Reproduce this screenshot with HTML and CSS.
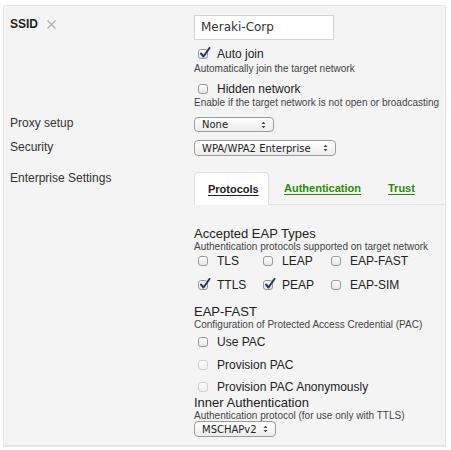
FILE: index.html
```html
<!DOCTYPE html>
<html>
<head>
<meta charset="utf-8">
<link rel="stylesheet" href="styles.css">
</head>
<body>
<div class="panel">
  <div class="form">
    <div class="label ssid-label"><b>SSID</b>
      <svg class="xicon" width="9" height="9" viewBox="0 0 9 9"><path d="M0.5 0.5 L8.5 8.5 M8.5 0.5 L0.5 8.5" stroke="#a9a9a9" stroke-width="1.1" fill="none"/></svg>
    </div>
    <div class="value">
      <div class="textbox">Meraki-Corp</div>
      <div class="check first"><span class="cb checked"><svg width="13" height="13" viewBox="0 0 13 13"><path d="M3 6.5 L5.5 9.5 L11.5 1" stroke="#24395f" stroke-width="2" fill="none" stroke-linecap="round" stroke-linejoin="round"/></svg></span>Auto join</div>
      <div class="help h1">Automatically join the target network</div>
      <div class="check second"><span class="cb"></span>Hidden network</div>
      <div class="help">Enable if the target network is not open or broadcasting</div>
    </div>

    <div class="label proxy-label">Proxy setup</div>
    <div class="value"><div class="select proxy-select w-none">None<span class="arrows"><svg width="5" height="8" viewBox="0 0 5 8"><path d="M0.5 3 L2.5 0.8 L4.5 3 Z M0.5 5 L2.5 7.2 L4.5 5 Z" fill="#444"/></svg></span></div></div>

    <div class="label sec-label">Security</div>
    <div class="value"><div class="select sec-select w-wpa">WPA/WPA2 Enterprise<span class="arrows"><svg width="5" height="8" viewBox="0 0 5 8"><path d="M0.5 3 L2.5 0.8 L4.5 3 Z M0.5 5 L2.5 7.2 L4.5 5 Z" fill="#444"/></svg></span></div></div>

    <div class="label ent-label">Enterprise Settings</div>
    <div class="value tabs-wrap">
      <div class="tabs">
        <div class="tab active">Protocols</div>
        <div class="tab link">Authentication</div>
        <div class="tab link">Trust</div>
      </div>
      <div class="tabbody">
        <div class="heading eap-head">Accepted EAP Types</div>
        <div class="help">Authentication protocols supported on target network</div>
        <div class="eapgrid">
          <div class="check"><span class="cb"></span>TLS</div>
          <div class="check"><span class="cb"></span>LEAP</div>
          <div class="check"><span class="cb"></span>EAP-FAST</div>
          <div class="check"><span class="cb checked"><svg width="13" height="13" viewBox="0 0 13 13"><path d="M3 6.5 L5.5 9.5 L11.5 1" stroke="#24395f" stroke-width="2" fill="none" stroke-linecap="round" stroke-linejoin="round"/></svg></span>TTLS</div>
          <div class="check"><span class="cb checked"><svg width="13" height="13" viewBox="0 0 13 13"><path d="M3 6.5 L5.5 9.5 L11.5 1" stroke="#24395f" stroke-width="2" fill="none" stroke-linecap="round" stroke-linejoin="round"/></svg></span>PEAP</div>
          <div class="check"><span class="cb"></span>EAP-SIM</div>
        </div>
        <div class="heading fast-head">EAP-FAST</div>
        <div class="help">Configuration of Protected Access Credential (PAC)</div>
        <div class="check pac1"><span class="cb"></span>Use PAC</div>
        <div class="check pac2"><span class="cb disabled"></span>Provision PAC</div>
        <div class="check pac3"><span class="cb disabled"></span>Provision PAC Anonymously</div>
        <div class="heading inner-head">Inner Authentication</div>
        <div class="help">Authentication protocol (for use only with TTLS)</div>
        <div class="select inner-select w-ms">MSCHAPv2<span class="arrows"><svg width="5" height="8" viewBox="0 0 5 8"><path d="M0.5 3 L2.5 0.8 L4.5 3 Z M0.5 5 L2.5 7.2 L4.5 5 Z" fill="#444"/></svg></span></div>
      </div>
    </div>
  </div>
</div>
</body>
</html>
```

FILE: styles.css
```css
html, body {
  margin: 0;
  padding: 0;
  background: #ffffff;
}
body {
  font-family: "Liberation Sans", Arial, sans-serif;
  color: #333;
  width: 451px;
  height: 450px;
  overflow: hidden;
}
.panel {
  box-sizing: border-box;
  margin: 5px 5px 0 3px;
  width: 443px;
  height: 442px;
  background: #f4f4f4;
  border: 1px solid #e7e7e7;
  border-width: 1px 1px 2px 1px;
  padding: 9px 0 0 6px;
}
.form {
  display: grid;
  grid-template-columns: 184px 1fr;
  align-items: start;
}
.label {
  font-size: 12px;
  line-height: 14px;
  color: #333;
}
.ssid-label {
  padding-top: 2px;
  display: flex;
  align-items: center;
  gap: 9px;
}
.ssid-label b {
  font-weight: bold;
  color: #222;
}
.xicon { display: block; margin-top: 1px; }

.textbox {
  box-sizing: border-box;
  width: 140px;
  height: 25px;
  background: #fff;
  border: 1px solid #d4d4d4;
  font-family: "DejaVu Sans", sans-serif;
  font-size: 12px;
  line-height: 23px;
  padding-left: 6px;
  color: #333;
}
.check {
  display: flex;
  align-items: center;
  font-size: 12px;
  line-height: 16px;
  height: 16px;
  color: #222;
}
.check.first { margin-top: 6px; }
.check.second { margin-top: 6px; }
.cb {
  position: relative;
  box-sizing: border-box;
  width: 10px;
  height: 10px;
  margin: 0 9px 0 4px;
  border: 1px solid #9a9a9a;
  border-radius: 3px;
  background: linear-gradient(#ffffff, #e6e6e6);
  flex: none;
}
.cb.disabled {
  border-color: #d0d0d0;
  background: linear-gradient(#fbfbfb, #f0f0f0);
}
.cb svg {
  position: absolute;
  left: -1px;
  top: -3px;
}
.help {
  font-size: 10px;
  line-height: 12px;
  color: #444;
  white-space: nowrap;
}
.help.h1 { margin-top: 1px; }

.select {
  box-sizing: border-box;
  display: flex;
  align-items: center;
  justify-content: space-between;
  height: 15px;
  border: 1px solid #9c9c9c;
  border-radius: 4px;
  background: linear-gradient(#ffffff, #ececec);
  font-family: "DejaVu Sans", sans-serif;
  font-size: 10px;
  color: #222;
  padding: 0 7px 0 7px;
  white-space: nowrap;
}
.arrows { display: flex; align-items: center; }
.arrows svg { display: block; }
.w-none { width: 80px; }
.w-wpa { width: 142px; height: 16px; }
.w-ms { width: 82px; height: 16px; }

.proxy-label { margin-top: 7px; }
.proxy-select { margin-top: 8px; }
.sec-label { margin-top: 8px; }
.sec-select { margin-top: 8px; }
.ent-label { margin-top: 15px; }
.tabs-wrap { margin-top: 16px; }

.tabs {
  display: flex;
  height: 32px;
  border-bottom: 1px solid #e2e2e2;
  margin-right: -1px;
}
.tab {
  box-sizing: border-box;
  height: 33px;
  padding: 0 12px 0 13px;
  margin-right: 2px;
  font-size: 11px;
  font-weight: bold;
  line-height: 31px;
  text-decoration: underline;
  text-underline-offset: 2px;
}
.tab.active {
  width: 75px;
  background: #ffffff;
  border: 1px solid #e2e2e2;
  border-bottom: none;
  border-radius: 4px 4px 0 0;
  color: #222;
  padding-top: 1px;
}
.tab.link {
  color: #2d8a08;
  padding-top: 1px;
}
.heading {
  font-size: 13px;
  line-height: 15px;
  color: #222;
}
.eap-head { margin-top: 21px; }
.eapgrid {
  display: grid;
  grid-template-columns: 65px 68px auto;
  row-gap: 8px;
  margin-top: 0;
}
.fast-head { margin-top: 11px; }
.pac1 { margin-top: 3px; }
.pac2 { margin-top: 7px; }
.pac3 { margin-top: 6px; }
.inner-head { margin-top: 0; }
.inner-select { margin-top: -1px; }
```
